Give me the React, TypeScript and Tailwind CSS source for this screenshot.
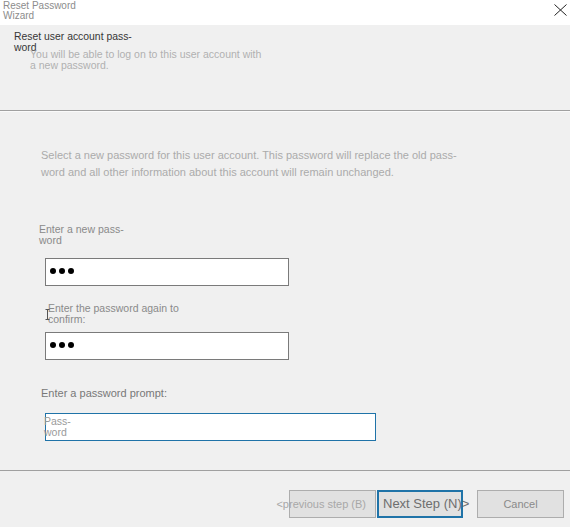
export default function App() {
  const dots = (
    <div className="flex gap-[3px] pl-[4px] pb-[3px]">
      <span className="w-[6px] h-[6px] rounded-full bg-black" />
      <span className="w-[6px] h-[6px] rounded-full bg-black" />
      <span className="w-[6px] h-[6px] rounded-full bg-black" />
    </div>
  );

  return (
    <div className="w-[570px] h-[527px] bg-[#f0f0f0] font-['Liberation_Sans',Arial,sans-serif] overflow-hidden">
      {/* title bar */}
      <div className="h-[25px] bg-white flex justify-between items-start">
        <div className="pl-[3px] pt-[1px] text-[10px] leading-[9.5px] text-[#8c8c8c]">
          Reset Password
          <br />
          Wizard
        </div>
        <svg className="mt-[4px] mr-[3px]" width="13" height="12" viewBox="0 0 13 12">
          <path d="M0.5 0.5 L12.5 11.5 M12.5 0.5 L0.5 11.5" stroke="#222" strokeWidth="1" fill="none" />
        </svg>
      </div>

      {/* header */}
      <div className="h-[85px] pl-[14px] pt-[7px]">
        <div className="text-[10.4px] leading-[10.5px] text-[#363636]">
          Reset user account pass-
          <br />
          word
        </div>
        <div className="-mt-[4px] pl-[16px] text-[10.5px] leading-[10.5px] text-[#b0b0b0]">
          You will be able to log on to this user account with
          <br />
          a new password.
        </div>
      </div>
      <div className="h-px bg-[#a0a0a0]" />
      <div className="h-px bg-[#fafafa]" />

      {/* body */}
      <div className="mt-[35px] ml-[41px] text-[11px] leading-[17px] text-[#ababab]">
        Select a new password for this user account. This password will replace the old pass-
        <br />
        word and all other information about this account will remain unchanged.
      </div>

      <div className="mt-[43px] ml-[39px] text-[10.5px] leading-[11px] text-[#8a8a8a]">
        Enter a new pass-
        <br />
        word
      </div>
      <div className="mt-[12px] ml-[45px] w-[244px] h-[28px] bg-white border border-[#7a7a7a] flex items-center">
        {dots}
      </div>

      <div className="relative mt-[17px] ml-[48px] text-[10.5px] leading-[11px] text-[#8a8a8a]">
        <svg className="absolute -left-[3px] top-[6px]" width="5" height="11" viewBox="0 0 5 11">
          <path d="M0.5 0.5 H4.5 M2.5 0.5 V10.5 M0.5 10.5 H4.5" stroke="#555" strokeWidth="1" fill="none" />
        </svg>
        Enter the password again to
        <br />
        confirm:
      </div>
      <div className="mt-[7px] ml-[45px] w-[244px] h-[28px] bg-white border border-[#7a7a7a] flex items-center">
        {dots}
      </div>

      <div className="mt-[27px] ml-[41px] text-[11px] leading-[13px] text-[#787878]">
        Enter a password prompt:
      </div>
      <div className="mt-[13px] ml-[45px] w-[331px] h-[28px] bg-white border border-[#1f73a8]">
        <div className="-ml-[2px] pt-[2px] text-[10.5px] leading-[10.5px] text-[#9a9a9a]">
          Pass-
          <br />
          word
        </div>
      </div>

      <div className="mt-[29px] h-px bg-[#a0a0a0]" />

      {/* buttons */}
      <div className="mt-[19px] flex justify-end pr-[6px]">
        <div className="w-[87px] h-[28px] bg-[#e1e1e1] border border-[#adadad] flex items-center justify-end pr-[9px] whitespace-nowrap text-[11px] text-[#a8a8a8]">
          &lt;previous step (B)
        </div>
        <div className="ml-[1px] w-[86px] h-[28px] bg-[#e1e1e1] border-2 border-[#1f73a8] flex items-center pl-[4px] whitespace-nowrap text-[13px] text-[#6e6e6e]">
          Next Step (N)&gt;
        </div>
        <div className="ml-[14px] w-[87px] h-[28px] bg-[#e1e1e1] border border-[#adadad] flex items-center justify-center text-[11px] text-[#8a8a8a]">
          Cancel
        </div>
      </div>
    </div>
  );
}
